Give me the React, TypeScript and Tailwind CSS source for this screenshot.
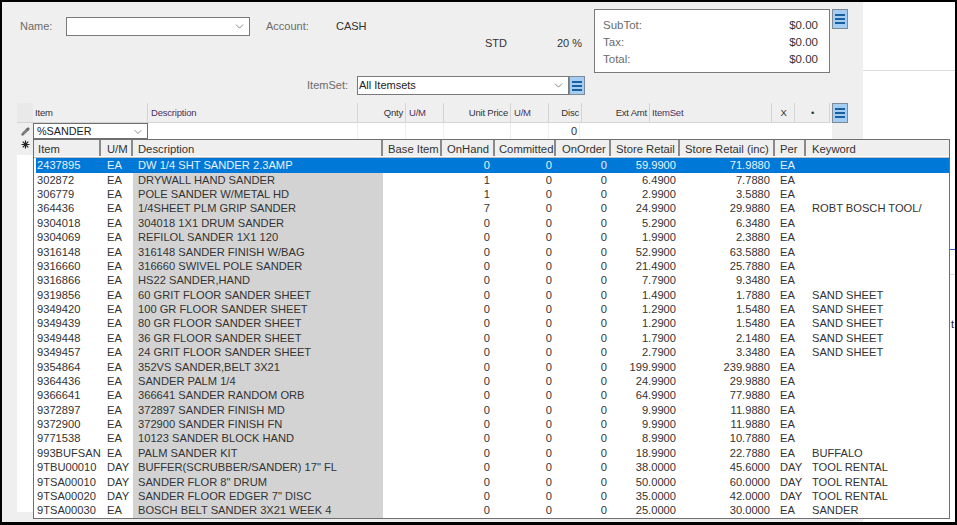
import { ChevronDown, Pencil } from "lucide-react";

const rows = [
  ["2437895", "EA", "DW 1/4 SHT SANDER 2.3AMP", "", "0", "0", "0", "59.9900", "71.9880", "EA", ""],
  ["302872", "EA", "DRYWALL HAND SANDER", "", "1", "0", "0", "6.4900", "7.7880", "EA", ""],
  ["306779", "EA", "POLE SANDER W/METAL HD", "", "1", "0", "0", "2.9900", "3.5880", "EA", ""],
  ["364436", "EA", "1/4SHEET PLM GRIP SANDER", "", "7", "0", "0", "24.9900", "29.9880", "EA", "ROBT BOSCH TOOL/"],
  ["9304018", "EA", "304018 1X1 DRUM SANDER", "", "0", "0", "0", "5.2900", "6.3480", "EA", ""],
  ["9304069", "EA", "REFILOL SANDER 1X1 120", "", "0", "0", "0", "1.9900", "2.3880", "EA", ""],
  ["9316148", "EA", "316148 SANDER FINISH W/BAG", "", "0", "0", "0", "52.9900", "63.5880", "EA", ""],
  ["9316660", "EA", "316660 SWIVEL POLE SANDER", "", "0", "0", "0", "21.4900", "25.7880", "EA", ""],
  ["9316866", "EA", "HS22 SANDER,HAND", "", "0", "0", "0", "7.7900", "9.3480", "EA", ""],
  ["9319856", "EA", "60 GRIT FLOOR SANDER SHEET", "", "0", "0", "0", "1.4900", "1.7880", "EA", "SAND SHEET"],
  ["9349420", "EA", "100 GR FLOOR SANDER SHEET", "", "0", "0", "0", "1.2900", "1.5480", "EA", "SAND SHEET"],
  ["9349439", "EA", "80 GR FLOOR SANDER SHEET", "", "0", "0", "0", "1.2900", "1.5480", "EA", "SAND SHEET"],
  ["9349448", "EA", "36 GR FLOOR SANDER SHEET", "", "0", "0", "0", "1.7900", "2.1480", "EA", "SAND SHEET"],
  ["9349457", "EA", "24 GRIT FLOOR SANDER SHEET", "", "0", "0", "0", "2.7900", "3.3480", "EA", "SAND SHEET"],
  ["9354864", "EA", "352VS SANDER,BELT 3X21", "", "0", "0", "0", "199.9900", "239.9880", "EA", ""],
  ["9364436", "EA", "SANDER PALM 1/4", "", "0", "0", "0", "24.9900", "29.9880", "EA", ""],
  ["9366641", "EA", "366641 SANDER RANDOM ORB", "", "0", "0", "0", "64.9900", "77.9880", "EA", ""],
  ["9372897", "EA", "372897 SANDER FINISH MD", "", "0", "0", "0", "9.9900", "11.9880", "EA", ""],
  ["9372900", "EA", "372900 SANDER FINISH FN", "", "0", "0", "0", "9.9900", "11.9880", "EA", ""],
  ["9771538", "EA", "10123 SANDER BLOCK HAND", "", "0", "0", "0", "8.9900", "10.7880", "EA", ""],
  ["993BUFSAN", "EA", "PALM SANDER KIT", "", "0", "0", "0", "18.9900", "22.7880", "EA", "BUFFALO"],
  ["9TBU00010", "DAY", 'BUFFER(SCRUBBER/SANDER) 17" FL', "", "0", "0", "0", "38.0000", "45.6000", "DAY", "TOOL RENTAL"],
  ["9TSA00010", "DAY", 'SANDER FLOR 8" DRUM', "", "0", "0", "0", "50.0000", "60.0000", "DAY", "TOOL RENTAL"],
  ["9TSA00020", "DAY", 'SANDER FLOOR EDGER 7" DISC', "", "0", "0", "0", "35.0000", "42.0000", "DAY", "TOOL RENTAL"],
  ["9TSA00030", "EA", "BOSCH BELT SANDER 3X21 WEEK 4", "", "0", "0", "0", "25.0000", "30.0000", "EA", "SANDER"],
];

// popup columns, header and body share the same widths
const popupCols = [
  { label: "Item", w: "w-[67px]", head: "pl-[4px]", cell: "pl-[1px]" },
  { label: "U/M", w: "w-[32px]", head: "pl-[6px]", cell: "pl-[6px]" },
  { label: "Description", w: "w-[250px]", head: "pl-[5px]", cell: "pl-[5px]" },
  { label: "Base Item", w: "w-[59px]", head: "pl-[5px]", cell: "pl-[4px]" },
  { label: "OnHand", w: "w-[53px]", head: "pl-[5px]", cell: "pr-[5px] text-right" },
  { label: "Committed", w: "w-[61px]", head: "pl-[4px]", cell: "pr-[4px] text-right" },
  { label: "OnOrder", w: "w-[55px]", head: "pl-[6px]", cell: "pr-[4px] text-right" },
  { label: "Store Retail", w: "w-[69px]", head: "pl-[5px]", cell: "pr-[4px] text-right" },
  { label: "Store Retail (inc)", w: "w-[95px]", head: "pl-[5px]", cell: "pr-[5px] text-right" },
  { label: "Per", w: "w-[31px]", head: "pl-[5px]", cell: "pl-[5px]" },
  { label: "Keyword", w: "w-[144px]", head: "pl-[6px]", cell: "pl-[6px]" },
];

const gridCols = [
  { label: "Item", w: "w-[115px]", cls: "pl-[2px] text-[#333]" },
  { label: "Description", w: "w-[210px]", cls: "pl-[3px] text-[#4b2f63]" },
  { label: "Qnty", w: "w-[48px]", cls: "pr-[2px] text-right text-[#333]" },
  { label: "U/M", w: "w-[38px]", cls: "pl-[3px] text-[#4b2f63]" },
  { label: "Unit Price", w: "w-[67px]", cls: "pr-[2px] text-right text-[#333]" },
  { label: "U/M", w: "w-[38px]", cls: "pl-[3px] text-[#4b2f63]" },
  { label: "Disc", w: "w-[33px]", cls: "pr-[2px] text-right text-[#333]" },
  { label: "Ext Amt", w: "w-[68px]", cls: "pr-[2px] text-right text-[#333]" },
  { label: "ItemSet", w: "w-[122px]", cls: "pl-[2px] text-[#4b2f63]" },
  { label: "X", w: "w-[23px]", cls: "pl-[1px] text-center text-[#333]" },
  { label: "•", w: "w-[35px]", cls: "pl-[1px] text-center text-[#333]" },
];

const MenuButton = ({ className }: { className: string }) => (
  <div className={`flex w-[16px] shrink-0 flex-col justify-center gap-[2px] border border-[#7d8b99] bg-[#a3cdf3] px-[2px] ${className}`}>
    <div className="h-[2px] bg-[#1c5f9e]" />
    <div className="h-[2px] bg-[#1c5f9e]" />
    <div className="h-[2px] bg-[#1c5f9e]" />
  </div>
);

const Star = () => (
  <svg width="9" height="9" viewBox="0 0 9 9" stroke="#222" strokeWidth="1.2">
    <path d="M4.5 0.5v8M0.5 4.5h8M1.7 1.7l5.6 5.6M7.3 1.7l-5.6 5.6" />
  </svg>
);

export default function App() {
  return (
    <div className="relative flex h-[525px] w-[957px] overflow-hidden border-t-2 border-r-2 border-b-[3px] border-l-2 border-black bg-white font-['Liberation_Sans',Arial,sans-serif] text-[11px] text-[#333]">
      {/* Left: form panel */}
      <div className="flex w-[861px] shrink-0 flex-col bg-[#efefef]">
        <div className="flex h-[101px] shrink-0 pl-[16px]">
          <div className="flex w-[576px] shrink-0 flex-col pt-[15px]">
            <div className="flex h-[19px] items-center">
              <span className="ml-[2px] w-[46px] text-[#6b6b6b]">Name:</span>
              <div className="flex h-[19px] w-[184px] items-center justify-end border border-[#7a7a7a] bg-white pr-[3px]">
                <ChevronDown size={13} strokeWidth={1.2} color="#444" />
              </div>
              <span className="ml-[16px] w-[70px] text-[#6b6b6b]">Account:</span>
              <span>CASH</span>
            </div>
            <div className="flex h-[40px] items-start">
              <span className="ml-[467px] leading-[15px]">STD</span>
              <span className="ml-[50px] leading-[15px]">20 %</span>
            </div>
            <div className="flex h-[19px] items-center justify-end pr-[9px]">
              <span className="mr-[9px] text-[#6b6b6b]">ItemSet:</span>
              <div className="flex h-[19px] w-[212px] items-center justify-between border border-[#7a7a7a] bg-white pr-[3px] pl-[1px] text-[#222]">
                All Itemsets
                <ChevronDown size={13} strokeWidth={1.2} color="#444" />
              </div>
              <MenuButton className="h-[19px]" />
            </div>
          </div>
          <div className="mt-[7px] flex h-[64px] w-[236px] shrink-0 flex-col justify-center gap-[3px] border border-[#7a7a7a] bg-white pt-[2px] pr-[11px] pl-[8px] text-[11.5px] leading-[14px]">
            <div className="flex justify-between"><span className="text-[#6b6b6b]">SubTot:</span><span>$0.00</span></div>
            <div className="flex justify-between"><span className="text-[#6b6b6b]">Tax:</span><span>$0.00</span></div>
            <div className="flex justify-between"><span className="text-[#6b6b6b]">Total:</span><span>$0.00</span></div>
          </div>
          <MenuButton className="mt-[7px] ml-[2px] h-[20px]" />
        </div>

        {/* Order grid */}
        <div className="ml-[15px] flex h-[20px] w-[831px] shrink-0">
          <div className="w-[16px] shrink-0 border-b border-[#d4d4d4] bg-[#e9e9e9]" />
          {gridCols.map((c, i) => (
            <div key={i} className={`${c.w} ${c.cls} shrink-0 border-r border-b border-[#d4d4d4] text-[9.5px] leading-[19px] tracking-[-0.2px]`}>
              {c.label}
            </div>
          ))}
          <MenuButton className="ml-[2px] h-[20px]" />
        </div>
        <div className="ml-[15px] flex h-[16px] w-[815px] shrink-0">
          <div className="flex w-[16px] shrink-0 items-center justify-center">
            <Pencil size={9} color="#222" fill="#888" strokeWidth={1.4} />
          </div>
          <div className="flex w-[115px] shrink-0 items-center justify-between border border-[#6f6f6f] bg-white pt-[1px] pr-[3px] pl-[3px] text-[10.8px] text-[#222]">
            %SANDER
            <ChevronDown size={12} strokeWidth={1.2} color="#444" />
          </div>
          <div className="flex flex-1 bg-white">
            <div className="w-[210px] border-r border-[#efefef]" />
            <div className="w-[48px] border-r border-[#efefef]" />
            <div className="w-[38px] border-r border-[#efefef]" />
            <div className="w-[67px] border-r border-[#efefef]" />
            <div className="w-[38px] border-r border-[#efefef]" />
            <div className="w-[31px] border-r border-[#efefef] pr-[2px] text-right leading-[16px]">0</div>
          </div>
        </div>
        <div className="ml-[15px] flex h-[16px] w-[16px] shrink-0 items-center justify-center pb-[6px]">
          <Star />
        </div>
        <div className="ml-[15px] h-[357px] w-[831px] shrink-0 bg-white" />
      </div>

      {/* Right: what shows behind the form */}
      <div className="flex-1 bg-white">
        <div className="mt-[68px] h-px bg-[#dcdcdc]" />
        <div className="mt-[178px] h-px bg-[#3b5fc0]" />
        <div className="mt-[24px] h-px bg-[#dcdcdc]" />
        <div className="mt-[42px] pl-[88px] leading-[14px] text-[#222]">t</div>
      </div>

      {/* Item lookup dropdown */}
      <div className="absolute top-[137px] left-[31px] flex h-[380px] w-[917px] flex-col border border-[#6f6f6f] bg-white text-[11.15px]">
        <div className="flex h-[16px] shrink-0 bg-[#efefef] text-[11.25px]">
          {popupCols.map((c) => (
            <div key={c.label} className={`${c.w} ${c.head} shrink-0 border-r-2 border-[#8a8a8a] pt-[2px] leading-[14px] last:border-r-0`}>
              {c.label}
            </div>
          ))}
        </div>
        <div className="h-[2.3px] shrink-0 border-b border-[#bdbdbd] bg-white" />
        {rows.map((row, r) => (
          <div
            key={row[0]}
            className={r === 0 ? "ml-[2px] flex h-[14.375px] shrink-0 bg-[#0078d7] leading-[14.375px] text-[#e8f2fb]" : "ml-[2px] flex h-[14.375px] shrink-0 leading-[14.375px]"}
          >
            {row.map((v, i) => (
              <div
                key={i}
                className={`${popupCols[i].w} ${popupCols[i].cell} ${i === 0 ? "-mr-[2px]" : ""} ${i === 2 && r > 0 ? "bg-[#d3d3d3]" : ""} shrink-0 whitespace-nowrap`}
              >
                {v}
              </div>
            ))}
          </div>
        ))}
      </div>
    </div>
  );
}
